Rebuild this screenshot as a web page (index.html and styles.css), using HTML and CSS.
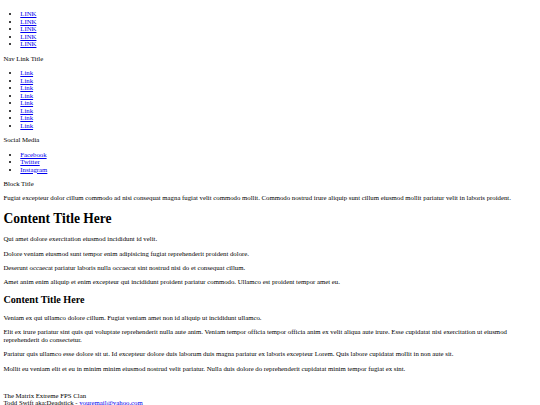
FILE: index.html
```html
<!DOCTYPE html>
<html>
<head>
<meta charset="utf-8">
<title>The Matrix Extreme FPS Clan</title>
<link rel="stylesheet" href="styles.css">
</head>
<body class="page">
<ul class="list">
  <li><a class="link" href="#">LINK</a></li>
  <li><a class="link" href="#">LINK</a></li>
  <li><a class="link" href="#">LINK</a></li>
  <li><a class="link" href="#">LINK</a></li>
  <li><a class="link" href="#">LINK</a></li>
</ul>
<div class="label">Nav Link Title</div>
<ul class="list">
  <li><a class="link" href="#">Link</a></li>
  <li><a class="link" href="#">Link</a></li>
  <li><a class="link" href="#">Link</a></li>
  <li><a class="link" href="#">Link</a></li>
  <li><a class="link" href="#">Link</a></li>
  <li><a class="link" href="#">Link</a></li>
  <li><a class="link" href="#">Link</a></li>
  <li><a class="link" href="#">Link</a></li>
</ul>
<div class="label">Social Media</div>
<ul class="list">
  <li><a class="link" href="#">Facebook</a></li>
  <li><a class="link" href="#">Twitter</a></li>
  <li><a class="link" href="#">Instagram</a></li>
</ul>
<div class="label">Block Title</div>
<p class="text">Fugiat excepteur dolor cillum commodo ad nisi consequat magna fugiat velit commodo mollit. Commodo nostrud irure aliquip sunt cillum eiusmod mollit pariatur velit in laboris proident.</p>
<h1 class="title">Content Title Here</h1>
<p class="text">Qui amet dolore exercitation eiusmod incididunt id velit.</p>
<p class="text">Dolore veniam eiusmod sunt tempor enim adipisicing fugiat reprehenderit proident dolore.</p>
<p class="text">Deserunt occaecat pariatur laboris nulla occaecat sint nostrud nisi do et consequat cillum.</p>
<p class="text">Amet anim enim aliquip et enim excepteur qui incididunt proident pariatur commodo. Ullamco est proident tempor amet eu.</p>
<h2 class="subtitle">Content Title Here</h2>
<p class="text">Veniam ex qui ullamco dolore cillum. Fugiat veniam amet non id aliquip ut incididunt ullamco.</p>
<p class="text">Elit ex irure pariatur sint quis qui voluptate reprehenderit nulla aute anim. Veniam tempor officia tempor officia anim ex velit aliqua aute irure. Esse cupidatat nisi exercitation ut eiusmod reprehenderit do consectetur.</p>
<p class="text">Pariatur quis ullamco esse dolore sit ut. Id excepteur dolore duis laborum duis magna pariatur ex laboris excepteur Lorem. Quis labore cupidatat mollit in non aute sit.</p>
<p class="text">Mollit eu veniam elit et eu in minim minim eiusmod nostrud velit pariatur. Nulla duis dolore do reprehenderit cupidatat minim tempor fugiat ex sint.</p>
<footer class="footer">The Matrix Extreme FPS Clan<br>Todd Swift aka:Deadstick - <a class="link" href="#">youremail@yahoo.com</a></footer>
</body>
</html>
```
FILE: styles.css
```css
.page {
  margin: 3.4px;
  font-family: "Liberation Serif", "Times New Roman", serif;
  font-size: 6.77px;
  line-height: 1.12;
  color: #000;
  background: #fff;
}
.list {
  margin: 1em 0;
  padding-left: 16.9px;
}
.link {
  color: #0000ee;
}
.label {
  margin: 0;
}
.text {
  margin: 1em 0;
}
.title {
  font-size: 2em;
  margin: 0.67em 0;
}
.subtitle {
  font-size: 1.5em;
  margin: 0.83em 0;
}
.footer {
  margin-top: 19.5px;
}
```
